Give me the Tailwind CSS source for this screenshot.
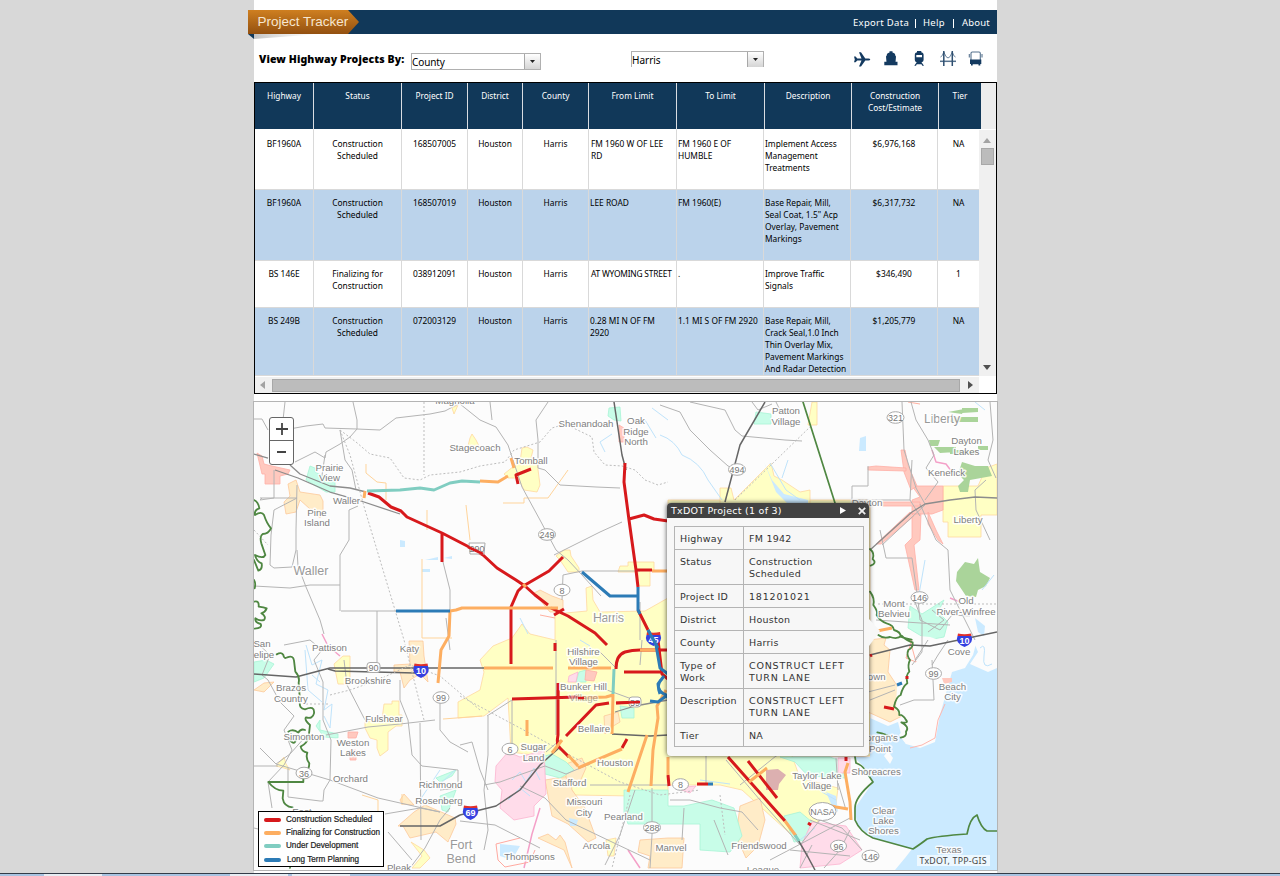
<!DOCTYPE html>
<html lang="en">
<head>
<meta charset="utf-8">
<title>Project Tracker</title>
<script src="https://cdn.jsdelivr.net/npm/@tailwindcss/browser@4"></script>
</head>
<body class="bg-[#d8d8d8] h-[876px] overflow-hidden font-['Noto_Sans',sans-serif] text-black">
<div class="flex flex-col h-[876px]">
<main class="ml-[254px] w-[743px] h-[873px] shrink-0 bg-white flex flex-col">
  <!-- top bar -->
  <header class="mt-[10px] h-6 shrink-0 bg-[#113859] flex items-center relative">
    <svg class="absolute -left-[6px] top-0" width="130" height="31" viewBox="0 0 130 31">
      <defs>
        <linearGradient id="rib" x1="0" y1="0" x2="0" y2="1"><stop offset="0" stop-color="#cf7f20"/><stop offset="1" stop-color="#935010"/></linearGradient>
        <linearGradient id="shd" x1="0" y1="0" x2="1" y2="0"><stop offset="0" stop-color="#999" stop-opacity=".6"/><stop offset="1" stop-color="#ccc" stop-opacity="0"/></linearGradient>
      </defs>
      <path d="M6 24H72L6 29Z" fill="url(#shd)"/>
      <path d="M0 24H6V29Z" fill="#113859"/>
      <path d="M0 0H100L111 12L100 24H0Z" fill="url(#rib)"/>
    </svg>
    <h1 class="relative ml-[3.500px] -mt-[1px] font-['Liberation_Sans',sans-serif] text-[13.5px] leading-4 text-[#f6e6d0] whitespace-nowrap">Project Tracker</h1>
    <nav class="ml-auto mr-[8px] mt-[2px] flex items-center text-white text-[9.5px] leading-3 whitespace-nowrap">
      <span class="w-[55px] tracking-[0.3px]">Export Data</span><span class="w-px h-[9px] bg-white ml-[7px] mr-[7px]"></span>
      <span class="w-[22px] tracking-[0.3px]">Help</span><span class="w-px h-[9px] bg-white mx-[8px]"></span>
      <span class="w-[27px] tracking-[0.2px]">About</span>
    </nav>
  </header>
  <!-- filters -->
  <section class="h-[48px] shrink-0 flex items-start">
    <span class="ml-[5px] mt-[17px] w-[152px] text-[10.500px] leading-4 font-black tracking-[0.1px] whitespace-nowrap">View Highway Projects By:</span>
    <div class="mt-[19px] w-[130px] h-[17px] border border-[#b0b0b0] flex text-[10px] leading-[16px] bg-white">
      <span class="flex-1 tracking-[-0.1px]">County</span>
      <span class="w-4 border-l border-[#a8a8a8] bg-gradient-to-b from-white to-[#d5d5d5] flex items-center justify-center"><svg width="5" height="3"><path d="M0 0H5L2.500 3Z" fill="#222"/></svg></span>
    </div>
    <div class="ml-[90px] mt-[17px] w-[133px] h-[16px] border border-b-0 border-[#b0b0b0] flex text-[10px] leading-[16px] bg-white">
      <span class="flex-1">Harris</span>
      <span class="w-4 border-l border-[#a8a8a8] bg-gradient-to-b from-white to-[#d5d5d5] flex items-center justify-center"><svg width="5" height="3"><path d="M0 0H5L2.500 3Z" fill="#222"/></svg></span>
    </div>
    <svg class="ml-[89px] mt-[15px]" width="132" height="20" viewBox="853 49 132 20" fill="#143a60" stroke="none">
      <path d="M854 56.5L855.6 56.5L857.3 58.5H861.5L859 52.2H861L865.3 58.5H868.5Q870 58.7 870.3 59.5Q870 60.3 868.5 60.5H865.3L861 66.5H859L861.5 60.5H857.3L855.6 62.3H854L854.8 59.5Z"/>
      <path d="M889.5 51.300H892.500V52.500Q895.300 53 895.300 55.500L896 56.500L895.500 62.300H886.500L886 56.500L886.700 55.500Q886.700 53 889.500 52.500ZM884.300 61.800L897.500 61.800V65.300H884.300Z"/>
      <path fill-rule="evenodd" d="M917 51H921.3V52.2Q923.6 52.8 923.6 54.5V60Q923.6 62 921.5 62.3L924 65.7H922.3L921.5 64.3H916.7L916 65.7H914.3L916.7 62.3Q914.8 62 914.8 60V54.5Q914.8 52.8 917 52.2ZM916.3 55V57.3H922V55Z"/>
      <g fill="none" stroke="#56728e"><path d="M940 61.300H956" stroke-width="1.500"/><path d="M940.500 57Q942.500 56.500 943.800 52Q948 64 952.300 52Q953.500 56.500 955.500 57" stroke-width=".9"/><path d="M943.800 51V66M952.300 51V66" stroke="#2f4f70" stroke-width="1.500"/></g>
      <g fill="none" stroke="#56728e" stroke-width="1.100"><path d="M971 60V53.300Q971 52 972.300 52H979Q980.300 52 980.300 53.300V60M969.300 54V57.500M982 54V57.500"/></g>
      <path d="M970 59.500H981.300V64H980.300V65.500H978.500V64.300H972.700V65.500H971V64H970Z"/>
    </svg>
  </section>
  <!-- project table -->
  <section class="h-[312px] shrink-0 border border-black bg-white flex flex-col text-[9px] leading-3 text-center overflow-hidden">
    <div class="flex h-[46px] shrink-0 bg-[#ededed]">
      <div class="grid grid-cols-[59px_88px_66px_55px_66px_88px_88px_87px_87px_42px] text-white text-[8.3px] [&>div]:bg-[#113859] [&>div]:pt-[7px] [&>div]:border-r [&>div]:border-[#d9dde2] whitespace-nowrap">
        <div>Highway</div><div>Status</div><div>Project ID</div><div>District</div><div>County</div><div>From Limit</div><div>To Limit</div><div>Description</div><div>Construction<br>Cost/Estimate</div><div class="!border-r-0">Tier</div>
      </div>
    </div>
    <div class="flex h-[247px] shrink-0">
      <div class="w-[724px] overflow-hidden text-[8.400px] grid content-start grid-cols-[59px_88px_66px_55px_66px_88px_87px_87px_87px_41px] grid-rows-[61px_71px_47px_68px] whitespace-nowrap [&>div]:border-r [&>div]:border-b [&>div]:border-[#d9d9d9] [&>div]:pt-[7px]">
        <div class="!pt-[9px]">BF1960A</div><div class="!pt-[9px]">Construction<br>Scheduled</div><div class="!pt-[9px]">168507005</div><div class="!pt-[9px]">Houston</div><div class="!pt-[9px]">Harris</div><div class="!pt-[9px] text-left pl-[2px]">FM 1960 W OF LEE<br>RD</div><div class="!pt-[9px] text-left pl-[1px]">FM 1960 E OF<br>HUMBLE</div><div class="!pt-[9px] text-left pl-[1px]">Implement Access<br>Management<br>Treatments</div><div class="!pt-[9px]">$6,976,168</div><div class="!pt-[9px] !border-r-0">NA</div>

        <div class="bg-[#bbd3eb]">BF1960A</div><div class="bg-[#bbd3eb]">Construction<br>Scheduled</div><div class="bg-[#bbd3eb]">168507019</div><div class="bg-[#bbd3eb]">Houston</div><div class="bg-[#bbd3eb]">Harris</div><div class="bg-[#bbd3eb] text-left pl-[1px]">LEE ROAD</div><div class="bg-[#bbd3eb] text-left pl-[1px]">FM 1960(E)</div><div class="bg-[#bbd3eb] text-left pl-[1px]">Base Repair, Mill,<br>Seal Coat, 1.5" Acp<br>Overlay, Pavement<br>Markings</div><div class="bg-[#bbd3eb]">$6,317,732</div><div class="bg-[#bbd3eb] !border-r-0">NA</div>

        <div>BS 146E</div><div>Finalizing for<br>Construction</div><div>038912091</div><div>Houston</div><div>Harris</div><div class="text-left pl-[2px] tracking-[-0.2px]">AT WYOMING STREET</div><div class="text-left pl-[1px]">.</div><div class="text-left pl-[1px]">Improve Traffic<br>Signals</div><div>$346,490</div><div class="!border-r-0">1</div>

        <div class="bg-[#bbd3eb]">BS 249B</div><div class="bg-[#bbd3eb]">Construction<br>Scheduled</div><div class="bg-[#bbd3eb]">072003129</div><div class="bg-[#bbd3eb]">Houston</div><div class="bg-[#bbd3eb]">Harris</div><div class="bg-[#bbd3eb] text-left pl-[1px]">0.28 MI N OF FM<br>2920</div><div class="bg-[#bbd3eb] text-left pl-[1px]">1.1 MI S OF FM 2920</div><div class="bg-[#bbd3eb] text-left pl-[1px]">Base Repair, Mill,<br>Crack Seal,1.0 Inch<br>Thin Overlay Mix,<br>Pavement Markings<br>And Radar Detection</div><div class="bg-[#bbd3eb]">$1,205,779</div><div class="bg-[#bbd3eb] !border-r-0">NA</div>
      </div>
      <div class="flex-1 bg-[#f0f0f0] mt-px flex flex-col items-center">
        <svg class="mt-2 -ml-px" width="8" height="5"><path d="M0 5H8L4 0Z" fill="#a3a3a3"/></svg>
        <div class="mt-[5px] w-[13px] h-[17px] -ml-px bg-[#bcbcbc] border border-[#a8a8a8]"></div>
        <svg class="mt-auto mb-[6px] -ml-px" width="8" height="5"><path d="M0 0H8L4 5Z" fill="#505050"/></svg>
      </div>
    </div>
    <div class="flex flex-1 items-center bg-[#f0f0f0] mr-[17px] border-t border-white">
      <svg class="ml-[5px]" width="5" height="8"><path d="M5 0V8L0 4Z" fill="#a3a3a3"/></svg>
      <div class="ml-[7px] w-[688px] h-[13px] bg-[#bcbcbc] border border-[#a8a8a8]"></div>
      <svg class="ml-[8px]" width="5" height="8"><path d="M0 0V8L5 4Z" fill="#505050"/></svg>
    </div>
  </section>
  <!-- map -->
  <section class="relative mt-[7px] -ml-px w-[745px] h-[470px] shrink-0 border border-[#b4b4b4] bg-[#fcfcfc] overflow-hidden">
  <svg class="block" width="743" height="468" viewBox="254 402 743 468" fill="none" stroke-linejoin="round">
    <!-- municipal areas -->
    <g stroke-width=".8">
      <g fill="#ffffc4" stroke="#ffd8a0">
        <path d="M555 614L587 611L586 588L592 586L593 600L600 612L645 611L668 598V500H870V756L792 756L800 778L838 788L836 804L815 824L795 838L742 790L720 785H668V796L632 796L575 795L556 765L540 756L511 752L508 698L484 716L458 718V702L480 690L484 672L480 660L493 646L512 638L522 624L530 634L555 640Z"/>
        <path d="M514 466L520 462L522 448L527 447L533 450L531 458L537 462L540 485L537 492L524 490L518 478L508 478L504 474Z"/>
        <path d="M556 556L564 550L570 550L571 556L579 568L579 572H568L560 560Z"/><path d="M628 566V562H654V570H650V586H638V572H618L620 566Z"/>
        <path d="M720 488H731L734 500L771 463L774 476L782 480L800 492L810 490V504H720Z"/><path d="M812 402H817V425H808Z"/>
        <path d="M943 486H978L986 468L997 464V515H981V537H948V522H943Z"/>
        <path d="M365 728V722L382 720L384 704H392V701H399V715H402V726H396L388 732V750L380 756L377 748V740L370 738Z"/>
        <path d="M334 664L343 656H350V684H338Z"/><path d="M276 766L284 757L286 764L290 770L284 768Z"/>
        <path d="M470 438L472 434L476 440L479 446H468Z"/><path d="M411 842L424 850L430 858L420 868H412L422 856Z"/>
        <path d="M606 840L616 838L614 856L608 856Z"/><path d="M452 408L458 405L454 414Z"/>
      </g>
      <g fill="#ffecc8" stroke="#fcc99a">
        <path d="M288 484L296 480L300 492L320 495L323 501V512L320 518L300 500L296 512L286 514L284 502L290 496Z"/>
        <path d="M394 665L410 664L409 641H423L424 656L428 682L420 674L410 680L404 688L400 672L394 672Z"/>
        <path d="M534 593L540 590L552 596L563 600V608L556 612H550Z"/>
        <path d="M398 826L414 812L425 805L455 818L456 824L448 842L436 832L410 838L403 826ZM400 800L404 794L414 805L402 804Z"/>
        <path d="M545 780L570 776L572 790L585 808L596 838L588 842L568 824L552 816Z"/>
        <path d="M538 838L548 834L556 840L560 835L565 842L572 868L564 850Z"/>
        <path d="M640 840L668 838H684L682 868H648L650 856L638 852Z"/>
        <path d="M868 640L886 638L884 645L890 650L888 672L900 690L896 705L906 714L890 722L868 712Z"/>
        <path d="M740 806L760 798L765 820L758 846L746 858L736 836Z"/>
        <path d="M910 640L924 638L914 662L900 662Z"/><path d="M254 690L264 683L274 682L264 692Z"/>
        <path d="M604 716L618 712L620 722L610 728L605 734Z"/><path d="M566 764L582 758L586 768L578 786L566 778Z"/>
      </g>
      <g fill="#c8fde8" stroke="#a8f4d6">
        <path d="M310 466L315 468V472L335 482V492L326 492L306 480Z"/><path d="M609 408L620 407L621 421L614 420L608 416Z"/>
        <path d="M756 412L771 414V424H754Z"/><path d="M254 662L266 660L274 664L264 678L254 682Z"/>
        <path d="M541 757L552 754L566 762L574 770L560 778L545 774L541 764Z"/>
        <path d="M624 790H668V806H684L712 800L734 808L742 836L730 852L700 850V824H628L624 812Z"/>
        <path d="M780 757L830 757L848 764L845 778L808 776L795 762Z"/>
        <path d="M784 816L800 812L812 822L806 840L794 842Z"/><path d="M316 726L320 720V730L338 734V738L324 737Z"/>
        <path d="M910 606L922 614L944 600L938 612L948 622L944 637L928 640L908 628Z"/><path d="M579 672L586 670V682H576Z"/>
        <path d="M436 778L456 770L452 776L440 782ZM440 796L456 790L448 812L442 810Z"/><path d="M620 706L634 708V718L622 718Z"/>
      </g>
      <g fill="#ffdcea" stroke="#fbb4cf">
        <path d="M496 766L508 752L520 757L544 750L546 794L534 806V816L514 820L500 808L502 790L495 782Z"/>
        <path d="M802 844L812 822L846 826L862 850L840 864L800 868Z"/><path d="M569 676L578 672L576 682H568Z"/>
        <path d="M676 788L696 786L690 793Z"/><path d="M838 758H850V773H838Z"/>
      </g>
      <g fill="#ffc9bf" stroke="#ffaea6">
        <path d="M912 486H943V510L932 514H912L912 500L920 497Z"/><path d="M882 502H920V506H882ZM901 450H905L908 465L917 486L911 490L904 472ZM912 514H921L920 540L914 545L919 590H915L905 545L912 538ZM928 512L936 530L943 544L938 540L928 524Z"/>
        <path d="M868 467L876 466L906 468V471L868 470ZM910 512L876 544H881L914 516Z"/>
        <path d="M257 453L262 456L264 464L272 466L290 470L288 474L280 476V484H265V474H262Z"/>
        <path d="M586 670L597 672L594 681L585 680Z"/><path d="M619 425L624 428V442H619Z"/>
        <path d="M348 732H358L356 738H348ZM350 750H356V760H350Z"/>
      </g>
      <path d="M766 770L778 769L786 775L779 784L778 790H766Z" fill="#dcb0b0"/>
    </g>
    <!-- parks -->
    <path fill="#aad49a" d="M962 408H978V412L962 413ZM948 412L964 409L962 414ZM951 417H978V422H950ZM929 440H940L938 446H930ZM934 447H956V452L940 453ZM950 450H976V454H950ZM978 446H988V450H978ZM962 462L975 466H988L992 476L970 480L968 492L960 492L958 486L964 480L958 474ZM957 572L965 562L974 564L978 558L980 572L990 578L986 586L978 590L976 597L966 596L962 590L956 581Z"/>
    <!-- water -->
    <g fill="#cbeaff">
      <path d="M854 757H870V718L888 726L898 722L902 738L906 744L920 748L935 742L940 715L947 690L952 672L965 668L973 655L976 644L984 652H997V870H895L905 858L912 849L873 838L857 825L855 808L873 782L865 768Z"/>
      <path d="M860 438L866 436L866 451H859ZM400 540L405 541V547H400ZM425 560L438 557V560ZM444 558L452 556V559ZM975 618L985 626L984 636L978 632ZM826 792L836 796L838 812L832 806ZM500 844L520 846L512 860L500 856ZM422 569H430V572H422ZM569 818L578 820L576 826H570Z"/>
      <path d="M764 462L772 480L784 494L808 500V504H788L776 492Z"/>
    </g>
    <g stroke="#bfe3fb" stroke-width="1">
      <path d="M660 435Q675 440 682 455Q700 462 708 480L722 500M645 420L656 438M306 645L312 665L322 660L316 684L328 690L324 710L332 704L330 728L324 716M770 463L786 490L800 500M975 402L985 410M305 650L308 690L322 702M320 682L312 675M520 618L528 634M605 452L600 442L612 434M782 478L788 460M652 408L668 420M580 640L590 646M436 788L455 770"/>
      <path d="M512 780L520 772L526 782L534 768L540 780M508 800L520 788L530 796M700 780L730 784M420 800L440 770M982 590L994 575M925 560L918 600M808 778L822 792L836 800M800 840L815 828"/>
    </g>
    <path d="M973 640L997 636V668L988 672L970 664L978 652Z" fill="#fcfcfc"/><path d="M980 648Q986 642 984 656T992 664" stroke="#bfe3fb"/>
    <path d="M888 751L884 756L890 764L893 758ZM899 634L930 637L955 645L952 662L944 690L936 705L934 728L925 740L906 744L899 735L908 725L896 710Z" fill="#fcfcfc"/>
    <path d="M945 704L938 720L935 738L922 745L910 748" stroke="#ffb7ae"/><path d="M942 678H952V682L944 684Z" fill="#ffc9bf"/>
    <!-- local boundaries -->
    <g stroke="#ffd49b" stroke-width="1">
      <path d="M366 464V473L377 482L386 483V500M422 559V638H452M427 510V530M466 505L470 540M568 470L548 498L524 498V503H503M443 719L482 716M362 795L378 800V812M402 794V805"/>
      <path d="M908 402L920 404M540 615L555 618M912 640L906 658L916 662L910 640" stroke="#ffb0a0"/>
      <path d="M322 634L328 646L340 656M540 808L532 834L524 868M628 850L640 868M950 598L960 602M932 450L936 462L946 464L952 472" stroke="#f4a0c8" stroke-width="1.5"/>
      <path d="M520 838L496 844L498 860L505 867L530 862L535 850" stroke="#ffa9a0"/>
    </g>
    <!-- streets -->
    <g stroke="#b4b4b4" stroke-width="1">
      <path d="M285 402L283 420L277 435M353 402L357 420V429L325 428L323 424L306 426L284 430L277 434M357 429L380 430L396 418L430 414L445 411L462 402M357 429L350 437L340 444L326 452L325 458L315 452L295 462M340 430L345 460L352 470L356 490M254 419H262L268 430M325 455L321 482M274 470V498L260 500L262 498M260 498H297L274 510L271 535L270 565L274 568L292 567L296 550V530L297 485M297 550L298 566L306 587L320 620L324 634M358 506L349 510V540L340 555L340 611M254 586L290 588L310 585H340M341 611H396M377 611V662M460 404L480 420L496 427L508 445L515 466L522 487L540 520L556 550L568 560L582 575L601 596M490 402L492 420M548 402L536 420L538 440V468L545 470L560 485L596 487L620 488M554 555L600 532L622 522M582 571L640 571M562 600L563 575L582 571M443 562L450 590V611"/>
      <path d="M660 405L680 412L690 430L710 450L728 466L733 468M690 402L725 410L735 430L742 436L785 440L802 441M752 402L758 410L772 404M776 402L780 410M902 402L904 450L916 488L925 504M911 402L916 420L928 440L934 455L926 468L938 482L925 500M912 460L910 500L920 516M920 504L936 540L948 550L950 590L975 640M852 503L852 486H868V466M880 530L886 558L912 558L918 600L920 620L940 630L952 615L970 616M876 620L950 625M882 545L925 505M910 500H852M986 480L975 490L976 510L990 540M990 402L993 440L988 460L996 478M915 602L922 620V652L912 665M932 610L944 620L928 632"/>
      <path d="M254 640L270 655L262 675L268 680L280 702L294 716L284 730L292 750L284 765L268 782L272 808M254 766H278M260 748L276 764L330 780L378 798L440 812M276 764L290 754L306 736M288 768V797L320 801H323L324 790L330 780L331 740L323 720V682L314 660L322 650L310 640L284 645M344 660L347 685L364 718L367 723M326 735L368 727L400 724L435 720M400 680V700L408 720L412 755L422 766L458 770V788L440 790M420 723L421 840M440 700V730L450 742L468 752M446 618L450 650M254 828L262 830M385 814L420 808L440 812M388 832L412 860M450 808L440 820L425 848L410 868M484 785L500 782L522 774L545 766L566 774L590 764M488 716V755L484 790L488 830L484 850M512 700V755M487 716L512 700M556 640V735M460 821L495 825L540 848M520 786L545 798L566 820L612 842L650 860M460 745L472 742L480 770L488 790M590 785H668M635 790L620 835L605 865M652 788V835L650 868M546 752L560 740M596 686L640 702M598 650L616 668M640 602V640M642 640L640 665"/>
      <path d="M670 800H690L720 808L742 812L758 830M706 755V785M714 820L728 855M740 785L776 756L800 748M726 760L760 800L800 845M684 808L682 840M800 845L820 820L842 828L862 850M770 860L850 818M790 850L850 856M810 820L860 840M800 868L812 845M824 868L840 850L850 830M838 783L846 810M836 758L838 790M932 660L934 700H914L900 705M928 640L915 660M868 692L895 685M870 700L895 690M948 640L938 655L932 665"/>
    </g>
    <g stroke="#8c8c8c" stroke-width="1.3">
      <path d="M254 454L268 458M275 470L298 478L330 492L358 500L400 514M290 465L300 474L330 486L350 488L366 492M870 550L912 512L925 504L950 500L975 497L997 498"/>
      <path d="M615 712L635 706L668 700"/>
    </g>
    <g stroke="#666" stroke-width="1.5">
      <path d="M614 402L622 455L626 470M765 402L740 445L725 502M254 674L296 677L330 668H415L484 668H520M328 669L335 671L415 673M460 815L440 826L400 826M460 815L496 806L520 790L540 765L560 747M612 734L650 736L668 735M797 838L808 857L815 870M870 655L910 645L930 646L997 632"/>
    </g>
    <g stroke="#bdbdbd" stroke-width="1" stroke-dasharray="2 2">
      <path d="M340 430L350 455L365 510L404 640L424 720M340 430L356 442L370 454L390 458L404 478L420 480L430 475L460 472L480 466L505 462L514 450L540 442L552 428L565 424L592 437L594 452L605 465L622 466L635 470L645 480L658 485L668 482M424 402V475M460 696L520 728L560 750L620 782L660 795L700 790M330 695L350 690L378 680L410 665L440 676L480 710M630 795L612 868M735 500L812 425M878 604H997M306 704H330M720 795L725 835M254 530L268 545" />
    </g>
    <!-- county lines -->
    <g stroke="#4f8742" stroke-width="1.7" stroke-linecap="round">
      <path d="M803 402L835 503"/>
      <g stroke-width="5.500" transform="translate(250 400) scale(.33333)">
        <path d="M12 300Q25 305 28 325Q12 330 15 345Q35 332 42 345Q50 370 63 385Q55 402 38 402Q28 408 34 430L46 465Q40 478 15 465Q20 485 35 490Q38 508 25 512L12 480M12 540Q18 550 14 565M12 605Q28 600 26 620Q42 622 50 625Q46 636 34 640Q50 650 42 660Q28 664 16 655Q14 668 32 672Q38 684 14 686"/>
        <path d="M80 763Q95 755 100 765Q102 778 112 772Q130 765 132 782L136 815Q150 830 146 848L150 905Q146 925 165 928Q195 915 192 940Q188 958 168 952Q162 960 180 975L176 1010Q172 1030 152 1040Q155 1055 172 1058Q166 1075 178 1090Q178 1112 160 1120V1146H55Q75 1172 100 1172L98 1195Q102 1220 128 1222M115 995Q130 985 145 998Q152 985 165 990M118 1018Q135 1040 138 1015"/>
      </g>
      <g stroke-width="5.500" transform="translate(660 635) scale(.33333)">
        <path d="M630 -258Q645 -245 638 -228Q652 -215 632 -208M630 -130Q645 -110 640 -90Q655 -70 650 -60Q662 -40 680 -35Q700 -30 702 -15Q722 -10 722 5Q738 12 755 14M655 0Q670 12 690 6Q712 14 725 2Q740 18 758 22Q760 38 745 45Q738 60 750 75Q742 90 748 110Q736 120 742 145Q728 155 722 180Q708 185 702 215Q720 225 718 240Q728 238 738 255Q748 265 724 262Q750 275 738 290Q742 305 722 308M652 292Q680 296 700 312"/>
      </g>
      <path d="M855 757L856 763Q862 765 865 770L873 782Q855 797 855 808V820Q860 832 873 838L913 849Q922 843 927 839Q937 836 967 834Q970 818 977 815Q981 828 987 831H997"/>
      <path d="M290 868L291 860"/>
    </g>
    <!-- project segments -->
    <g stroke="#d7191c" stroke-width="3">
      <path d="M368 493L379 497L391 507L401 511L407 517L442 533L473 549L483 555L497 568L516 580L525 586L535 595L548 605M551 608L568 616L595 633L607 645M442 533V562M518 484L516 475L531 469M563 557L549 571L525 585M525 584L518 591L511 607V664M625 463L624 482L629 520L636 570L638 587M629 519L644 515L654 519L668 521M636 570H652M638 610L648 630M554 615L564 609"/>
      <path d="M616 669Q616 655 625 652Q632 650 640 650L668 650M624 672H662M658 640L662 674L668 679M512 699L578 697M558 683L558 735Q556 745 560 748L569 757M566 736L596 705L609 703M616 703L640 702M627 739L622 748M555 643V651" />
      <path d="M668 775L669 786M728 757L785 821M748 761L777 798M697 784H708M846 757V761M884 707L894 709M808 823L811 825M870 656L872 655M907 676V679" />
    </g>
    <g stroke="#fdae61" stroke-width="3">
      <path d="M365 491L364 498M511 458L514 468M480 481L498 482L508 476M558 608H462L456 610L450 611L449 636L441 650L438 683M652 571H668M484 668L553 668M568 668H611M582 698L606 697L613 695L612 734M578 768L622 749M562 740L552 753M568 755L578 766M647 735L628 792M666 690L657 706L658 718L653 750L651 786M668 757V775M749 782L767 768M848 763L845 772L850 802L851 820M827 805L836 807L848 809M785 821L796 836M877 631L892 628M527 720V736M640 650H656"/>
      <path d="M523 584L526 587"/>
    </g>
    <g stroke="#80cdc1" stroke-width="3"><path d="M367 491L400 490L420 488L434 490L450 483L462 481L480 482M614 669L613 694M795 835L799 841"/></g>
    <g stroke="#2c7bb6" stroke-width="3">
      <path d="M396 611H450M582 572L610 596H637M638 587V610L640 614M648 630L656 645L660 668L668 674M664 676L658 684Q658 692 666 695L668 698M662 679Q656 684 660 694M650 701L658 702L666 696M708 784H713M897 685L902 683"/>
    </g>
    <!-- route markers -->
    <g font-family="Liberation Sans" font-size="9" text-anchor="middle">
      <g fill="#fff" stroke="#aaa">
        <ellipse cx="547" cy="534.500" rx="8.500" ry="5.800"/><ellipse cx="562" cy="590" rx="8" ry="5.800"/><ellipse cx="737" cy="469.500" rx="8.500" ry="5.800"/><ellipse cx="895.500" cy="417.500" rx="8.500" ry="5.800"/><ellipse cx="919.500" cy="597.500" rx="8.500" ry="5.800"/><ellipse cx="441" cy="697.500" rx="8" ry="5.800"/><ellipse cx="304" cy="773" rx="8" ry="5.800"/><ellipse cx="510" cy="749" rx="8" ry="5.800"/><ellipse cx="652" cy="827.500" rx="8.500" ry="5.800"/><ellipse cx="680.500" cy="784.500" rx="8" ry="5.800"/><ellipse cx="933.500" cy="673.500" rx="8" ry="5.800"/><ellipse cx="822.500" cy="811.500" rx="13.500" ry="9"/><ellipse cx="838.500" cy="846" rx="8" ry="5.800"/><ellipse cx="870.500" cy="856" rx="8.500" ry="5.800"/>
        <rect x="367" y="662.500" width="13" height="10" rx="3"/><rect x="629" y="697" width="12" height="10" rx="3"/>
      </g>
      <g fill="#777">
        <text x="547" y="538">249</text><text x="562" y="593.500">8</text><text x="737" y="473">494</text><text x="895.500" y="421">321</text><text x="919.500" y="601">146</text><text x="441" y="701">99</text><text x="304" y="776.500">36</text><text x="510" y="752.500">6</text><text x="652" y="831">288</text><text x="680.500" y="788">8</text><text x="933.500" y="677">99</text><text x="822.500" y="815">NASA</text><text x="838.500" y="849.500">96</text><text x="870.500" y="859.500">146</text><text x="373.500" y="671">90</text><text x="635" y="705.500">59</text>
      </g>
      <path d="M469 543H485L484 554H470Z" fill="#fff" stroke="#aaa"/><text x="477" y="552" fill="#777">290</text>
      <path d="M468 547L483 554M616 703L640 702" stroke="#d7191c" stroke-width="2.500"/>
      <g stroke="none">
        <path d="M414 666H428Q431 674 421 678Q411 674 414 666Z" fill="#3540e0"/><path d="M414.500 663.500Q421 665 427.500 663.500L428 666H414Z" fill="#e0302c"/><text x="421" y="674" fill="#fff" font-weight="bold">10</text>
        <path d="M463.500 808H477.500Q480.500 816 470.500 820Q460.500 816 463.500 808Z" fill="#3540e0"/><path d="M464 805.500Q470.500 807 477 805.500L477.500 808H463.500Z" fill="#e0302c"/><text x="470.500" y="816" fill="#fff" font-weight="bold">69</text>
        <path d="M646.500 635H660.500Q663.500 642 653.500 646Q643.500 642 646.500 635Z" fill="#3540e0"/><path d="M647 632Q653.500 633.500 660 632L660.500 635H646.500Z" fill="#e0302c"/><text x="653.500" y="643" fill="#fff" font-weight="bold">45</text>
        <path d="M957.500 636H971.500Q974.500 643 964.500 647Q954.500 643 957.500 636Z" fill="#3540e0"/><path d="M958 633.500Q964.500 635 971 633.500L971.500 636H957.500Z" fill="#e0302c"/><text x="964.500" y="643.500" fill="#fff" font-weight="bold">10</text>
      </g>
    </g>
    <path d="M648 630L658 648" stroke="#2c7bb6" stroke-width="3"/>
    <!-- place names -->
    <g font-family="Liberation Sans" font-size="9.700" text-anchor="middle" fill="#7e7e7e" stroke="#fff" stroke-opacity=".85" stroke-width="3" paint-order="stroke">
      <text x="455" y="404">Magnolia</text>
      <text x="329.500" y="470.500">Prairie</text><text x="329.500" y="481">View</text><text x="346.500" y="504">Waller</text><text x="317" y="515.500">Pine</text><text x="317" y="526">Island</text>
      <text x="475" y="450.500">Stagecoach</text><text x="586" y="427">Shenandoah</text><text x="636" y="424">Oak</text><text x="636" y="434.500">Ridge</text><text x="636" y="445">North</text><text x="531" y="464">Tomball</text>
      <text x="786" y="414">Patton</text><text x="786" y="425">Village</text><text x="966.500" y="443.500">Dayton</text><text x="966.500" y="455">Lakes</text><text x="946.500" y="476">Kenefick</text><text x="867" y="505.500">Dayton</text><text x="968" y="522.500">Liberty</text>
      <text x="894" y="606.500">Mont</text><text x="894" y="617">Belvieu</text><text x="966" y="604">Old</text><text x="966" y="615">River-Winfree</text><text x="959" y="654.500">Cove</text><text x="952.500" y="689.500">Beach</text><text x="952.500" y="700">City</text>
      <text x="262" y="647">San</text><text x="264" y="657.500">elipe</text><text x="329.500" y="650.500">Pattison</text><text x="409.500" y="652">Katy</text><text x="368" y="684">Brookshire</text><text x="291" y="691">Brazos</text><text x="291" y="701.500">Country</text><text x="384" y="722">Fulshear</text><text x="304" y="740">Simonton</text><text x="353" y="745.500">Weston</text><text x="353" y="756">Lakes</text><text x="350.500" y="781.500">Orchard</text><text x="440.500" y="788">Richmond</text><text x="439" y="804">Rosenberg</text><text x="302" y="814.500">East</text><text x="399" y="870.500">Pleak</text>
      <text x="583.500" y="654.500">Hilshire</text><text x="583.500" y="665">Village</text><text x="583.500" y="690">Bunker Hill</text><text x="583.500" y="700.500" opacity=".6">Village</text><text x="594" y="732">Bellaire</text><text x="533.500" y="749.500">Sugar</text><text x="533.500" y="761">Land</text><text x="615" y="766">Houston</text><text x="569.500" y="785.500">Stafford</text><text x="584.500" y="805">Missouri</text><text x="584" y="816">City</text><text x="623.500" y="819.500">Pearland</text><text x="596.500" y="849">Arcola</text><text x="529.500" y="859.500">Thompsons</text><text x="671" y="851">Manvel</text>
      <text x="759" y="848.500">Friendswood</text><text x="763" y="873">League</text><text x="817" y="779">Taylor Lake</text><text x="817" y="789">Village</text><text x="876" y="774.500">Shoreacres</text><text x="878" y="741">Morgan's</text><text x="880" y="752">Point</text><text x="883.500" y="813.500">Clear</text><text x="883.500" y="823.500">Lake</text><text x="883.500" y="834">Shores</text><text x="949" y="853">Texas</text><text x="867" y="680">Baytown</text>
      <g font-size="12.500" fill="#999"><text x="311" y="575">Waller</text><text x="608.500" y="622" textLength="31">Harris</text><text x="942" y="423" textLength="36">Liberty</text><text x="461" y="849">Fort</text><text x="461" y="863">Bend</text></g>
    </g>
    <path d="M578 698H584M558 690V697" stroke="#d7191c" stroke-width="2.500"/>
    <rect x="917" y="855" width="73" height="11" fill="#fff" fill-opacity=".65"/>
    <text x="919.500" y="864" font-family="Noto Sans" font-size="8.800" fill="#444" textLength="67">TxDOT, TPP-GIS</text>
  </svg>
    <!-- zoom control -->
    <div class="absolute left-[15px] top-[15px] w-[25px] h-[48px] border border-[#666] rounded-[3px] bg-white">
      <div class="h-[23px] border-b border-[#666] flex items-center justify-center"><svg width="12" height="12"><path d="M6 0V12M0 6H12" stroke="#444" stroke-width="1.800"/></svg></div>
      <div class="h-[22px] flex items-center justify-center"><svg width="9" height="2"><path d="M0 1H9" stroke="#444" stroke-width="2"/></svg></div>
    </div>
    <!-- legend -->
    <div class="absolute left-[4px] top-[409px] w-[126px] h-[56px] border border-black bg-white font-['Liberation_Sans',sans-serif] text-[8.150px] text-[#222] [-webkit-text-stroke:0.2px_#222] whitespace-nowrap pt-px pl-[5px]">
      <div class="flex items-center h-[13.400px] gap-[5px]"><span class="w-[17px] h-[4px] shrink-0 rounded-sm bg-[#d7191c]"></span>Construction Scheduled</div>
      <div class="flex items-center h-[13.400px] gap-[5px]"><span class="w-[17px] h-[4px] shrink-0 rounded-sm bg-[#fdae61]"></span>Finalizing for Construction</div>
      <div class="flex items-center h-[13.400px] gap-[5px]"><span class="w-[17px] h-[4px] shrink-0 rounded-sm bg-[#80cdc1]"></span>Under Development</div>
      <div class="flex items-center h-[13.400px] gap-[6px]"><span class="w-[17px] h-[4px] shrink-0 rounded-sm bg-[#2c7bb6]"></span>Long Term Planning</div>
    </div>
    <!-- info popup -->
    <div class="absolute left-[413px] top-[101px] w-[202px] h-[253px] rounded-[4px] bg-[#f7f7f7] shadow-[0_0_5px_rgba(0,0,0,0.7)] text-[#333] font-['DejaVu_Sans',sans-serif] text-[9.5px] leading-3">
      <svg class="absolute left-[202px] top-[116px]" width="12" height="28"><path d="M0 0L11 12L0 27Z" fill="#f7f7f7"/></svg>
      <div class="h-[15px] bg-[#424242] rounded-t-[4px] text-white flex items-center pl-[4px]">
        <span class="tracking-[0.25px]">TxDOT Project (1 of 3)</span>
        <svg class="ml-auto mr-[12px]" width="6" height="7"><path d="M0 0L6 3.500L0 7Z" fill="#fff"/></svg>
        <svg class="mr-[3px]" width="8" height="8"><path d="M.8 .8L7.200 7.200M7.200 .8L.8 7.200" stroke="#eee" stroke-width="1.800"/></svg>
      </div>
      <div class="mt-[8px] ml-[7px] w-[190px] grid grid-cols-[69px_120px] grid-rows-[23px_35px_23px_23px_23px_35px_35px_23px] border-t border-l border-[#b4b4b4] whitespace-nowrap tracking-[0.25px] [&>div]:border-b [&>div]:border-r [&>div]:border-[#b4b4b4] [&>div]:pl-[5px] [&>div]:pt-[6px]">
        <div>Highway</div><div>FM 1942</div>
        <div>Status</div><div>Construction<br>Scheduled</div>
        <div>Project ID</div><div class="tracking-[0.8px]">181201021</div>
        <div>District</div><div>Houston</div>
        <div>County</div><div>Harris</div>
        <div>Type of<br>Work</div><div class="tracking-[0.8px]">CONSTRUCT LEFT<br>TURN LANE</div>
        <div>Description</div><div class="tracking-[0.8px]">CONSTRUCT LEFT<br>TURN LANE</div>
        <div>Tier</div><div>NA</div>
      </div>
    </div>
  </section>
</main>
<footer class="h-[3px] border-t border-[#333c48] bg-[#a9c4e2] flex">
  <span class="ml-[44px] w-[58px] bg-[#e8edf3]"></span><span class="ml-[128px] w-[58px] bg-[#e8edf3]"></span><span class="ml-[4px] w-[58px] bg-[#e8edf3]"></span>
</footer>
</div>
</body>
</html>
